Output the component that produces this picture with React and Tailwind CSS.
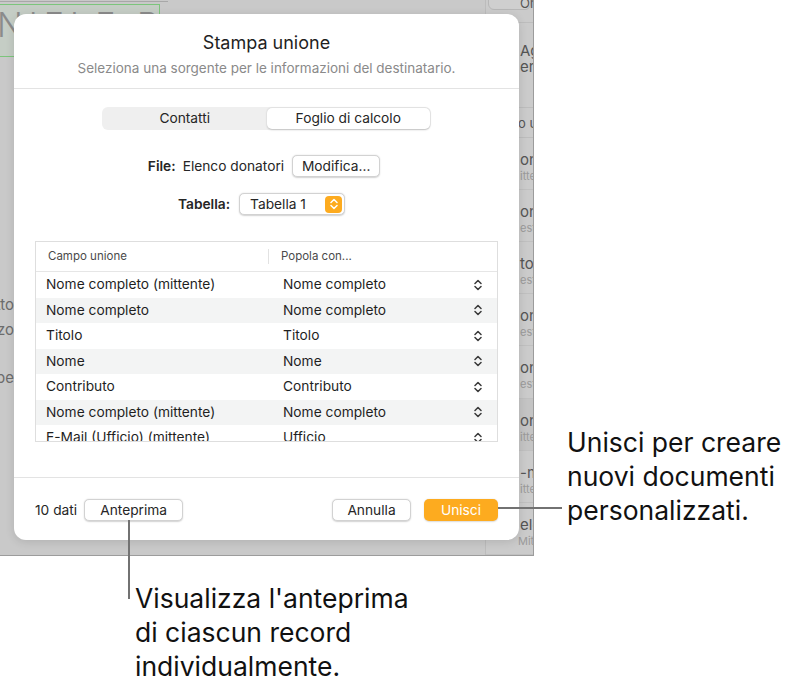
import React from "react";

const rows = [
  ["Nome completo (mittente)", "Nome completo"],
  ["Nome completo", "Nome completo"],
  ["Titolo", "Titolo"],
  ["Nome", "Nome"],
  ["Contributo", "Contributo"],
  ["Nome completo (mittente)", "Nome completo"],
  ["E-Mail (Ufficio) (mittente)", "Ufficio"],
];

// visible tails of the contact list behind the sheet
const sideRows = [
  ["onatore", "ittente"],
  ["onatore", "estinatario"],
  ["to", "estinatario"],
  ["onatore", "estinatario"],
  ["onatore", "estinatario"],
  ["onatore", "ittente"],
  ["-mail", "ittente"],
  ["elefono", "Mittente"],
];

function Chevrons({ color = "#3a3a3a", className = "" }) {
  return (
    <svg width="8" height="12" viewBox="0 0 8 12" className={className}>
      <path d="M1 4.5 L4 1.5 L7 4.5" fill="none" stroke={color} strokeWidth="1.5" strokeLinecap="round" strokeLinejoin="round" />
      <path d="M1 7.5 L4 10.5 L7 7.5" fill="none" stroke={color} strokeWidth="1.5" strokeLinecap="round" strokeLinejoin="round" />
    </svg>
  );
}

function Btn({ children, className = "" }) {
  return (
    <button
      type="button"
      className={
        "h-[22px] rounded-[5px] border-[0.5px] border-[#d2d2d2] bg-white text-[13.75px] leading-[20px] text-[#262626] shadow-[0_0.5px_1.5px_rgba(0,0,0,0.18)] " +
        className
      }
    >
      {children}
    </button>
  );
}

function Background() {
  return (
    <div className="flex h-[556px] w-[534px] border-r border-b border-[#9c9c9c] bg-[#c9c9c9]">
      {/* document canvas */}
      <div className="flex flex-1 flex-col overflow-hidden">
        <div className="h-[2px] w-[168px] border-b border-[#a8a8a8]" />
        <div className="mt-[2px] flex h-[53px] w-[160px] items-start overflow-hidden border border-l-0 border-[#7cc57c] bg-[#c5cdc5]">
          <span className="-ml-[3px] mt-[2px] whitespace-nowrap text-[34px] font-light leading-[36px] tracking-[6px] text-[#8b8b8b]">
            NIELE RIGGI
          </span>
        </div>
        <div className="mt-[239px] flex w-[14px] flex-col text-[15px] leading-[18px] text-[#6c6c6c]">
          <div className="flex justify-end overflow-hidden whitespace-nowrap">Contatto</div>
          <div className="mt-[7px] flex justify-end overflow-hidden whitespace-nowrap">Indirizzo</div>
          <div className="mt-[30px] flex justify-end overflow-hidden whitespace-nowrap">Tipe</div>
        </div>
      </div>

      {/* contact sidebar */}
      <div className="flex w-[48px] flex-col overflow-hidden border-l border-[#bcbcbc] bg-[#cbcbcb] whitespace-nowrap">
        <div className="h-[23px] border-b border-[#bdbdbd]">
          <div className="mx-[2px] -mt-[6px] h-[16px] rounded-[6px] border border-[#b7b7b7] bg-[#cfcfcf] pl-[31px] pt-[1px] text-[13px] leading-[14px] text-[#555]">
            Or
          </div>
        </div>
        <div className="h-[87px] border-b border-[#bdbdbd] pl-[34px] pt-[20px] text-[15px] leading-[16px] text-[#555]">
          <div>Aggiungi</div>
          <div>er</div>
        </div>
        <div className="h-[30px] border-b border-[#bdbdbd] pl-[32px] pt-[7px] text-[13px] leading-[16px] text-[#555]">
          o unione
        </div>
        {sideRows.map(([a, b], i) => (
          <div
            key={i}
            className={
              "relative h-[53px] border-b border-[#c0c0c0] pl-[34px] pt-[13px] " +
              (i === 5 ? "bg-[#c4c4c4]" : "")
            }
          >
            <div className="text-[15px] leading-[18px] text-[#555]">{a}</div>
            <div className={"text-[11px] leading-[14px] text-[#9a9a9a] " + (i === 7 ? "-ml-[2px]" : "")}>{b}</div>
            {i === 7 && <span className="absolute left-[0px] top-[21px] h-[10px] w-[10px] rounded-full bg-[#7fbf7f]" />}
          </div>
        ))}
      </div>
    </div>
  );
}

function Dialog() {
  return (
    <div className="absolute left-[14px] top-[14px] flex h-[526px] w-[505px] flex-col rounded-[12px] bg-white shadow-[0_2px_10px_rgba(0,0,0,0.12)]">
      <div className="border-b border-[#e3e3e3] pb-[12px] pt-[18px] text-center">
        <div className="text-[18px] leading-[22px] text-[#1f1f1f]">Stampa unione</div>
        <div className="mt-[6px] text-[13.5px] leading-[16px] text-[#8a8a8a]">
          Seleziona una sorgente per le informazioni del destinatario.
        </div>
      </div>

      {/* segmented control */}
      <div className="mx-auto mt-[18px] flex h-[23px] w-[329px] rounded-[6px] bg-[#efefef] p-[1px] text-[13.75px] text-[#262626]">
        <div className="flex flex-1 items-center justify-center">Contatti</div>
        <div className="flex flex-1 items-center justify-center rounded-[5px] bg-white shadow-[0_0.5px_2px_rgba(0,0,0,0.2)]">
          Foglio di calcolo
        </div>
      </div>

      <div className="mt-[25px] flex h-[22px] items-center justify-center pr-[5px] text-[13.75px] text-[#262626]">
        <span className="font-semibold">File:</span>
        <span className="ml-[7px]">Elenco donatori</span>
        <Btn className="ml-[8px] w-[88px]">Modifica...</Btn>
      </div>

      <div className="mt-[16px] flex h-[22px] items-center justify-center pr-[10px] text-[13.75px] text-[#262626]">
        <span className="font-semibold">Tabella:</span>
        <div className="ml-[9px] flex h-[22px] w-[106px] items-center justify-between rounded-[5px] border-[0.5px] border-[#d2d2d2] bg-white pl-[10px] pr-[2px] shadow-[0_0.5px_1.5px_rgba(0,0,0,0.18)]">
          <span>Tabella 1</span>
          <span className="flex h-[17px] w-[17px] items-center justify-center rounded-[4px] bg-[#fdab1f]">
            <Chevrons color="#ffffff" />
          </span>
        </div>
      </div>

      {/* merge fields table */}
      <div className="mx-[21px] mt-[26px] h-[201px] overflow-hidden border border-[#dedede]">
        <div className="flex h-[30px] items-center border-b border-[#e6e6e6] text-[11.5px] text-[#4a4a4a]">
          <span className="w-[232px] pl-[12px]">Campo unione</span>
          <span className="h-[15px] w-px bg-[#e2e2e2]" />
          <span className="pl-[12px]">Popola con...</span>
        </div>
        {rows.map(([a, b], i) => (
          <div
            key={i}
            className={
              "flex h-[25.5px] items-center text-[13.75px] text-[#1f1f1f] " +
              (i % 2 === 1 ? "bg-[#f3f4f4]" : "bg-white")
            }
          >
            <span className="w-[247px] pl-[10px]">{a}</span>
            <span className="flex-1">{b}</span>
            <Chevrons className="mr-[15px]" />
          </div>
        ))}
      </div>

      <div className="mt-[35px] flex flex-1 items-start border-t border-[#e3e3e3] px-[21px] pt-[21px] text-[13.75px] text-[#262626]">
        <div className="flex h-[22px] items-center">10 dati</div>
        <Btn className="ml-[7px] w-[99px]">Anteprima</Btn>
        <div className="flex-1" />
        <Btn className="w-[79px]">Annulla</Btn>
        <button
          type="button"
          className="ml-[13px] h-[22px] w-[74px] rounded-[5px] bg-[#fdab1f] text-[13.75px] leading-[20px] text-white shadow-[0_0.5px_1.5px_rgba(0,0,0,0.15)]"
        >
          Unisci
        </button>
      </div>
    </div>
  );
}

export default function App() {
  return (
    <div className="relative h-[694px] w-[811px] overflow-hidden bg-white font-['Inter',sans-serif]">
      <Background />
      <Dialog />

      {/* callout: Anteprima */}
      <div className="absolute left-[128px] top-[520px] h-[79px] w-[2px] bg-[#727272]" />
      <div className="absolute left-[135px] top-[581px] text-[26.5px] leading-[34px] text-[#111]">
        <div>Visualizza l'anteprima</div>
        <div>di ciascun record</div>
        <div>individualmente.</div>
      </div>

      {/* callout: Unisci */}
      <div className="absolute left-[498px] top-[507px] h-[2px] w-[64px] bg-[#727272]" />
      <div className="absolute left-[567px] top-[425px] text-[26.5px] leading-[34px] text-[#111]">
        <div>Unisci per creare</div>
        <div>nuovi documenti</div>
        <div>personalizzati.</div>
      </div>
    </div>
  );
}
